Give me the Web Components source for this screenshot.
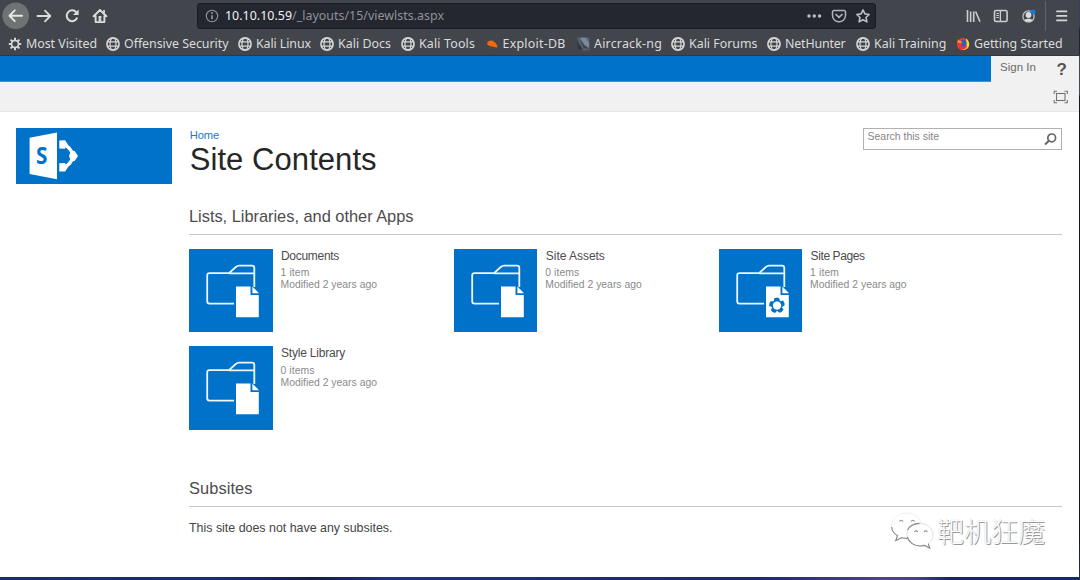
<!DOCTYPE html>
<html lang="en">
<head>
<meta charset="utf-8">
<title>Site Contents</title>
<style>
html,body{margin:0;padding:0;width:1080px;height:580px;overflow:hidden;background:#fff}
</style>
</head>
<body>
<app-window></app-window>
<script>
const define = (name, html, ready) => customElements.define(name, class extends HTMLElement {
  connectedCallback() {
    if (this.shadowRoot) return;
    this.attachShadow({mode: 'open'}).innerHTML = typeof html === 'function' ? html(this) : html;
    if (ready) ready(this);
  }
});

/* One line of text whose tracking is adjusted so that it spans the given width. */
define('fit-text', el => `<style>
:host{display:block;white-space:pre;font-size:${el.getAttribute('size')}px;line-height:${el.getAttribute('line')}px;height:${el.getAttribute('line')}px}
span{display:inline-block}</style><span><slot></slot></span>`, el => {
  const s = el.shadowRoot.querySelector('span'), w = +el.getAttribute('w');
  const natural = s.getBoundingClientRect().width;
  s.style.letterSpacing = ((w - natural) / el.textContent.length) + 'px';
});

const ICONS = {
  back: ['0 0 28 28', '<circle cx="14" cy="14" r="13.6" fill="#707374"/><path d="M20.500 14H8.2M13 8.5L7.6 14l5.4 5.5" fill="none" stroke="#e6e6e4" stroke-width="1.9" stroke-linecap="round" stroke-linejoin="round"/>'],
  forward: ['0 0 16 16', '<path d="M1.500 8h12.2M9 2.6L14.3 8 9 13.4" fill="none" stroke="#dcdcda" stroke-width="1.8" stroke-linecap="round" stroke-linejoin="round"/>'],
  reload: ['0 0 16 16', '<path d="M12.9 10.3A5.4 5.4 0 1 1 12.3 4.3" fill="none" stroke="#dcdcda" stroke-width="2" stroke-linecap="round"/><path d="M14.600 1.500v5.600H9z" fill="#dcdcda"/>'],
  home: ['0 0 16 16', '<path d="M1.600 8.300L8 2l6.400 6.300M3.600 7.800v6.300h8.800V7.800" fill="none" stroke="#dcdcda" stroke-width="1.900" stroke-linecap="round" stroke-linejoin="round"/><path d="M11.200 2h1.700v3.500h-1.700zM6.600 8h2.800v5.600H6.600z" fill="#dcdcda"/><path d="M8.500 10.500h1v1h-1z" fill="#42454b"/>'],
  info: ['0 0 14 14', '<circle cx="7" cy="7" r="5.700" fill="none" stroke="#97989c" stroke-width="1.100"/><path d="M7 6.200v4" stroke="#a5a6a9" stroke-width="1.500"/><circle cx="7" cy="4" r=".9" fill="#a5a6a9"/>'],
  dots: ['0 0 16 16', '<g fill="#bdbec1"><circle cx="3" cy="8" r="1.700"/><circle cx="8.300" cy="8" r="1.700"/><circle cx="13.600" cy="8" r="1.700"/></g>'],
  pocket: ['0 0 16 16', '<path d="M2.800 2.600h10.400a1.300 1.300 0 0 1 1.300 1.300V7.500a6.500 6.300 0 0 1-13 0V3.900a1.300 1.300 0 0 1 1.300-1.300z" fill="none" stroke="#b4b5b8" stroke-width="1.500"/><path d="M5 6.500l3 2.900 3-2.900" fill="none" stroke="#b4b5b8" stroke-width="1.700" stroke-linecap="round" stroke-linejoin="round"/>'],
  star: ['0 0 16 16', '<path d="M8 1.900l1.900 4 4.300.6-3.200 3 .9 4.400L8 11.800l-3.900 2.100.9-4.400-3.200-3 4.300-.6z" fill="none" stroke="#bdbec1" stroke-width="1.600" stroke-linejoin="round"/>'],
  library: ['0 0 16 16', '<path d="M2.500 2v12M5.600 3.500V14M8.700 3.500V14M10.600 3.500L15 13.700" fill="none" stroke="#cdcecf" stroke-width="1.600"/>'],
  sidebar: ['0 0 16 16', '<rect x="1.500" y="2.500" width="12.600" height="11" rx="1.600" fill="none" stroke="#cdcecf" stroke-width="1.600"/><path d="M7.400 2.500v11" stroke="#cdcecf" stroke-width="1.300"/><path d="M3.300 5.500h2.600M3.300 7.500h2.600M3.300 9.500h2.600" stroke="#cdcecf" stroke-width="1"/>'],
  account: ['0 0 16 16', '<circle cx="7.500" cy="8.500" r="5.600" fill="none" stroke="#bfc0c2" stroke-width="1.300"/><circle cx="7.500" cy="7" r="2.900" fill="#dcdcda"/><path d="M3.600 12.200c.6-2 7.200-2 7.800 0a5.500 5.500 0 0 1-7.800 0z" fill="#dcdcda"/><circle cx="12" cy="4" r="2.500" fill="#1379df"/>'],
  menu: ['0 0 16 16', '<path d="M3 3.400h9.500M3 7.900h9.500M3 12.400h9.500" stroke="#d6d6d6" stroke-width="1.700" stroke-linecap="round"/>'],
  gear: ['0 0 14 14', '<g stroke="#d8d8d8" stroke-width="2" stroke-linecap="round"><path d="M7 1.600v1.700M7 10.700v1.700M1.600 7h1.700M10.700 7h1.700M3.200 3.200l1.100 1.100M9.700 9.700l1.100 1.100M10.800 3.200L9.700 4.300M4.300 9.700l-1.100 1.100"/></g><circle cx="7" cy="7" r="3.500" fill="none" stroke="#d8d8d8" stroke-width="1.500"/>'],
  globe: ['0 0 14 14', '<g fill="none" stroke="#d8d8d8" stroke-width="1.200"><circle cx="7" cy="7" r="6.100" stroke-width="1.600"/><ellipse cx="7" cy="7" rx="3" ry="6"/><path d="M1.500 4.900h11M1.500 9.100h11"/></g>'],
  exploit: ['0 0 14 14', '<path d="M1.800 6.500C3.200 3.400 7 2.600 9.200 4.700c1.500 1.400 3.800 3.300 3.100 5.700-2 .7-3.600-.6-5-.8-2.500-.3-4.500-1-5.500-3.100z" fill="#ee6a0c"/><path d="M1 3.500l2 1.500M4 11l2-1M9 12l1-1" stroke="#8a3d22" stroke-width=".8"/>'],
  aircrack: ['0 0 14 14', '<path d="M.5.500h13v13H7L2 9z" fill="#55606c"/><path d="M.5.500L3 7l4 5.500L2 12z" fill="#30363d"/><path d="M4 .8h6l3 5v5L8.500 8z" fill="#7a899c"/><path d="M4 3l4.500 5.500 4.500 3.500-5-1z" fill="#3a4149"/>'],
  firefox: ['0 0 14 14', '<circle cx="7" cy="7.200" r="6.100" fill="#f4441b"/><path d="M10 1.500c3 1.700 4.300 6 2.200 9-1.700 2.300-4.700 3-7 2 3 0 5-1.500 5.300-4.500z" fill="#ffd52e"/><path d="M1.600 4.500C1 8 2.200 10.500 4.600 12c3 1.400 6-.5 6.500-3z" fill="#ef2f4c"/><path d="M5 3.500C7.500 1.200 10.800 3 10.600 6.600c0 3-3.800 4.300-5.200 2.100-.6-1 1-.9 1.500-1.800C7.300 5.700 5 6 5 3.500z" fill="#245fc4"/><path d="M1.300 5.500L2 2.300l1.500 1.500L6 4.400 5 6.300z" fill="#ff9222"/>'],
  focus: ['0 0 16 14', '<rect x="3.500" y="3.500" width="8.500" height="7" fill="none" stroke="#737373" stroke-width="1.100"/><path d="M1.200 4V1.300H4M11.500 1.300h2.800V4M14.300 10v2.700h-2.800M4 12.700H1.200V10" fill="none" stroke="#737373" stroke-width="1.100"/>'],
  search: ['0 0 13 13', '<circle cx="7.700" cy="4.900" r="3.900" fill="none" stroke="#666" stroke-width="1.700"/><path d="M5.100 7.600L1.100 11.600" stroke="#666" stroke-width="2.100"/>'],
  sharepoint: ['0 0 157 56', '<path d="M41 4.500v46.800L13.600 46V9.800z" fill="#fff"/><path d="M49 17c3.500 2 7 6 8.500 11-1.500 5-5 9-8.500 11" fill="none" stroke="#fff" stroke-width="3.400"/><path d="M43.300 12.500l5.800-.3 2.800 4.200-3 4.300-5.600-.2zM43.300 35.300l5.600-.3 3 4.300-2.800 4.100-5.800.2zM55 22.500l3.600.6L62 28l-3.400 5-3.600.6L53 28z" fill="#fff"/>'],
  folder: ['0 0 83.5 83.5', '<path d="M45 54.600H20.500Q18.200 54.600 18.200 52.300V26.500Q18.200 24.200 20.500 24.200H40L46.800 18Q48.500 16.600 50 16.600H63Q65.300 16.600 65.300 18.800V38M40 24.300H65" fill="none" stroke="#eef6fc" stroke-width="1.800"/><path d="M47 37.400H61.500V46H69.800V68.200H47z" fill="#fff"/><path d="M63.400 37.400L70 44.300H63.400z" fill="#fff"/>'],
  petals: ['0 0 83.5 83.5', '<g fill="#0072c9">' + [0, 72, 144, 216, 288].map(a => `<path d="M55.900 63.800l-1.300-4 3.400 1 3.200-1.200-.4 4.200-3 .6z" transform="rotate(${a + 36} 58 56.500)"/>`).join('') + '</g>'],
  bubbles: ['0 0 44 40', '<g fill="#fff" stroke="#aaa" stroke-width=".7"><path d="M16.500 2C8 2 1.500 7.800 1.500 14.800c0 4.200 2.400 7.700 6 10l-1.800 4.900 5.600-3c1.600.5 3.500.9 5.200.9 8.300 0 14.800-5.700 14.800-12.800S24.800 2 16.500 2z" stroke-opacity=".25"/><path d="M30 12.500c-7.300 0-13 5-13 11.200S22.700 35 30 35c1.600 0 3-.2 4.400-.6l5.300 2.800-1.400-4.500c2.900-2 4.700-5.200 4.700-9 0-6.200-5.700-11.200-13-11.200z" stroke-opacity=".5"/></g><g fill="none" stroke="#868686" stroke-width="1.100"><path d="M1.600 16c.6 4.500 3 7 5.900 8.800l-1.800 4.900 5.600-3 6 .8M17.300 26c1.500 5.500 7.200 9.200 13.200 9l4-.6 5.200 2.800-1.400-4.500M17.500 19c1.500-4 6.500-6.700 12-6.600M9.500 10.500q1.800-2.600 3.600 0M21 10.500q1.800-2.600 3.600 0M24.500 21q1.600-2.400 3.400 0M34 21q1.600-2.400 3.400 0"/></g>']
};
define('ui-icon', el => {
  const [box, body] = ICONS[el.getAttribute('name')];
  return `<style>:host{display:block;flex:none;width:${el.getAttribute('w')}px;height:${el.getAttribute('h') || el.getAttribute('w')}px}svg{display:block;width:100%;height:100%}</style><svg viewBox="${box}">${body}</svg>`;
});

define('address-bar', `<style>
:host{display:flex;align-items:center;box-sizing:border-box;width:679px;height:26px;margin-left:89px;padding:0 4px 0 7px;background:#242630;border:1px solid #191b22;border-radius:3px;color:#919296}
b{font-weight:400;color:#f2f2f2}fit-text{margin-left:6px;flex:1}.i{display:flex;gap:8.500px}
</style><ui-icon name="info" w="14"></ui-icon><fit-text size="12.4" line="18" w="219"><b>10.10.10.59</b>/_layouts/15/viewlsts.aspx</fit-text>
<div class="i"><ui-icon name="dots" w="16"></ui-icon><ui-icon name="pocket" w="16"></ui-icon><ui-icon name="star" w="16"></ui-icon></div>`);

define('nav-toolbar', `<style>
:host{display:flex;align-items:center;height:31px;padding-left:1.500px}
.g{display:flex;align-items:center;gap:12px;margin-left:7px}
.r{display:flex;align-items:center;margin-left:89px;gap:12px}
i{width:1px;height:30px;background:#606369;margin-left:-4px}
.r ui-icon:last-child{margin-left:-4px}
</style><ui-icon name="back" w="27.500"></ui-icon>
<div class="g"><ui-icon name="forward" w="16"></ui-icon><ui-icon name="reload" w="16"></ui-icon><ui-icon name="home" w="16"></ui-icon></div>
<address-bar></address-bar>
<div class="r"><ui-icon name="library" w="16"></ui-icon><ui-icon name="sidebar" w="16"></ui-icon><ui-icon name="account" w="16"></ui-icon><i></i><ui-icon name="menu" w="16"></ui-icon></div>`);

define('book-mark', el => `<style>:host{display:flex;align-items:center;gap:4px}</style>
<ui-icon name="${el.getAttribute('icon')}" w="14"></ui-icon><fit-text size="12.4" line="18" w="${el.getAttribute('w')}">${el.textContent}</fit-text>`);

const MARKS = [['gear','Most Visited',71],['globe','Offensive Security',104.5],['globe','Kali Linux',55],['globe','Kali Docs',53],['globe','Kali Tools',56],['exploit','Exploit-DB',63],['aircrack','Aircrack-ng',68],['globe','Kali Forums',68.500],['globe','NetHunter',60.500],['globe','Kali Training',72.500],['firefox','Getting Started',88.500]];
define('bookmarks-bar', `<style>:host{display:grid;grid-template-columns:98px 132px 82px 81px 83.500px 91.500px 95px 96px 89px 100px auto;padding:2px 0 0 8px;height:21px;align-items:center;color:#dcdcdc}</style>` +
  MARKS.map(([i, t, w]) => `<book-mark icon="${i}" w="${w}">${t}</book-mark>`).join(''));

define('browser-chrome', `<style>:host{display:block;height:56px;box-sizing:border-box;background:#42454b;border-bottom:1px solid #33383f;font-family:"Noto Sans",sans-serif}</style>
<nav-toolbar></nav-toolbar><bookmarks-bar></bookmarks-bar>`);

define('suite-bar', `<style>
:host{display:block;height:56px;box-sizing:border-box;background:#f1f1f1;border-bottom:1px solid #e6e6e6;color:#6b6b6b}
.t{display:flex;height:26px}.b{width:990.500px;background:#0072c9;box-sizing:border-box;border-bottom:1px solid #3f91d2}
.s{margin:3px 0 0 9.500px}.q{margin:4px 0 0 20.500px;font-weight:700;color:#555}
.f{margin:7.500px 0 0 1053px}
</style><div class="t"><div class="b"></div><fit-text class="s" size="11.500" line="16" w="36">Sign In</fit-text><fit-text class="q" size="17" line="20" w="10">?</fit-text></div>
<ui-icon class="f" name="focus" w="16" h="14"></ui-icon>`);

define('site-logo', `<style>:host{display:grid;width:156.500px;height:56px;background:#0072c9}ui-icon,b{grid-area:1/1}
b{font:700 23px/55px "Open Sans",sans-serif;color:#0072c9;margin-left:20.500px;transform:scaleX(.9);transform-origin:0 0}</style>
<ui-icon name="sharepoint" w="157" h="56"></ui-icon><b>S</b>`);

define('search-box', `<style>:host{display:flex;justify-content:space-between;box-sizing:border-box;width:199px;height:21.500px;border:1px solid #b1b1b1;padding:0 4px;color:#858585}ui-icon{margin-top:4px}fit-text{margin-top:1px}</style>
<fit-text size="10.500" line="13" w="71.500">Search this site</fit-text><ui-icon name="search" w="13"></ui-icon>`);

define('app-tile', el => `<style>
:host{display:flex;gap:8.500px;color:#8a8a8a}
.p{display:grid;width:83.500px;height:83.500px;background:#0072c9}.p>*{grid-area:1/1}
.n{color:#4c4c4c;margin-bottom:4.500px}.m{margin-left:-.5px}
</style><div class="p"><ui-icon name="folder" w="83.500"></ui-icon>${el.hasAttribute('cycle') ? '<ui-icon name="petals" w="83.500"></ui-icon>' : ''}</div>
<div><fit-text class="n" size="12" line="14" w="${el.getAttribute('nw')}">${el.getAttribute('name')}</fit-text>
<fit-text class="m" size="10.400" line="12" w="${el.getAttribute('cw')}">${el.getAttribute('count')}</fit-text>
<fit-text class="m" size="10.400" line="12" w="96.500">Modified 2 years ago</fit-text></div>`);

define('section-head', el => `<style>:host{display:block;padding-bottom:7.700px;border-bottom:1px solid #c8c8c8;color:#4c4c4c}</style>
<fit-text size="16.400" line="20" w="${el.getAttribute('w')}">${el.textContent}</fit-text>`);

define('site-contents', `<style>
:host{display:grid;grid-template-columns:156.500px 872.500px;column-gap:17px;padding:16px 0 0 15.500px}
.top{display:flex;justify-content:space-between;height:49.500px}
.home{color:#1b78cf;margin:1px 0 0 .7px}.title{color:#262626;margin-left:.7px}
.apps{display:grid;grid-template-columns:264.800px 264.800px 264.800px;row-gap:13.700px;margin-top:14px}
section{margin-top:28.800px}.sub{margin-top:48.700px}
p{margin:13px 0 0;color:#444}
</style><site-logo></site-logo><main>
<div class="top"><div><fit-text class="home" size="11.200" line="13" w="29.500">Home</fit-text><fit-text class="title" size="31" line="36" w="187">Site Contents</fit-text></div><search-box></search-box></div>
<section><section-head w="224.500">Lists, Libraries, and other Apps</section-head>
<div class="apps"><app-tile name="Documents" nw="58" count="1 item" cw="29"></app-tile><app-tile name="Site Assets" nw="59" count="0 items" cw="34"></app-tile><app-tile cycle name="Site Pages" nw="54" count="1 item" cw="29"></app-tile><app-tile name="Style Library" nw="64" count="0 items" cw="34"></app-tile></div></section>
<section class="sub"><section-head w="63.500">Subsites</section-head><p><fit-text size="12.400" line="16" w="203.500">This site does not have any subsites.</fit-text></p></section></main>`);

define('account-mark', `<style>:host{display:flex;position:absolute;left:890px;top:511px;align-items:center;gap:3px}
span{font:300 27px/38px "Noto Sans CJK SC",sans-serif;color:#fff;text-shadow:1px 1px .6px #999,0 0 1px #bbb}</style>
<ui-icon name="bubbles" w="44" h="40"></ui-icon><span>靶机狂魔</span>`);

define('app-window', `<style>
:host{display:block;position:relative;box-sizing:border-box;width:1080px;height:580px;overflow:hidden;background:#fff;font-family:"Liberation Sans",sans-serif}
.e{position:absolute;right:0;top:0;width:1px;height:580px;background:linear-gradient(#38405b 0 27px,#20242b 28px 55px,#454a52 56px 95px,#15171b 96px 540px,#263252)}
.d{position:absolute;left:0;bottom:0;width:1080px;height:3px;background:linear-gradient(90deg,#1b2d68,#192d72 20%,#151e45 29%,#20327c 36%,#1c2a66 70%,#514581 82%,#47417e 85%,#17265d 88%,#172a64)}
</style><browser-chrome></browser-chrome><suite-bar></suite-bar><site-contents></site-contents><account-mark></account-mark><div class="d"></div><div class="e"></div>`);
</script>
</body>
</html>
